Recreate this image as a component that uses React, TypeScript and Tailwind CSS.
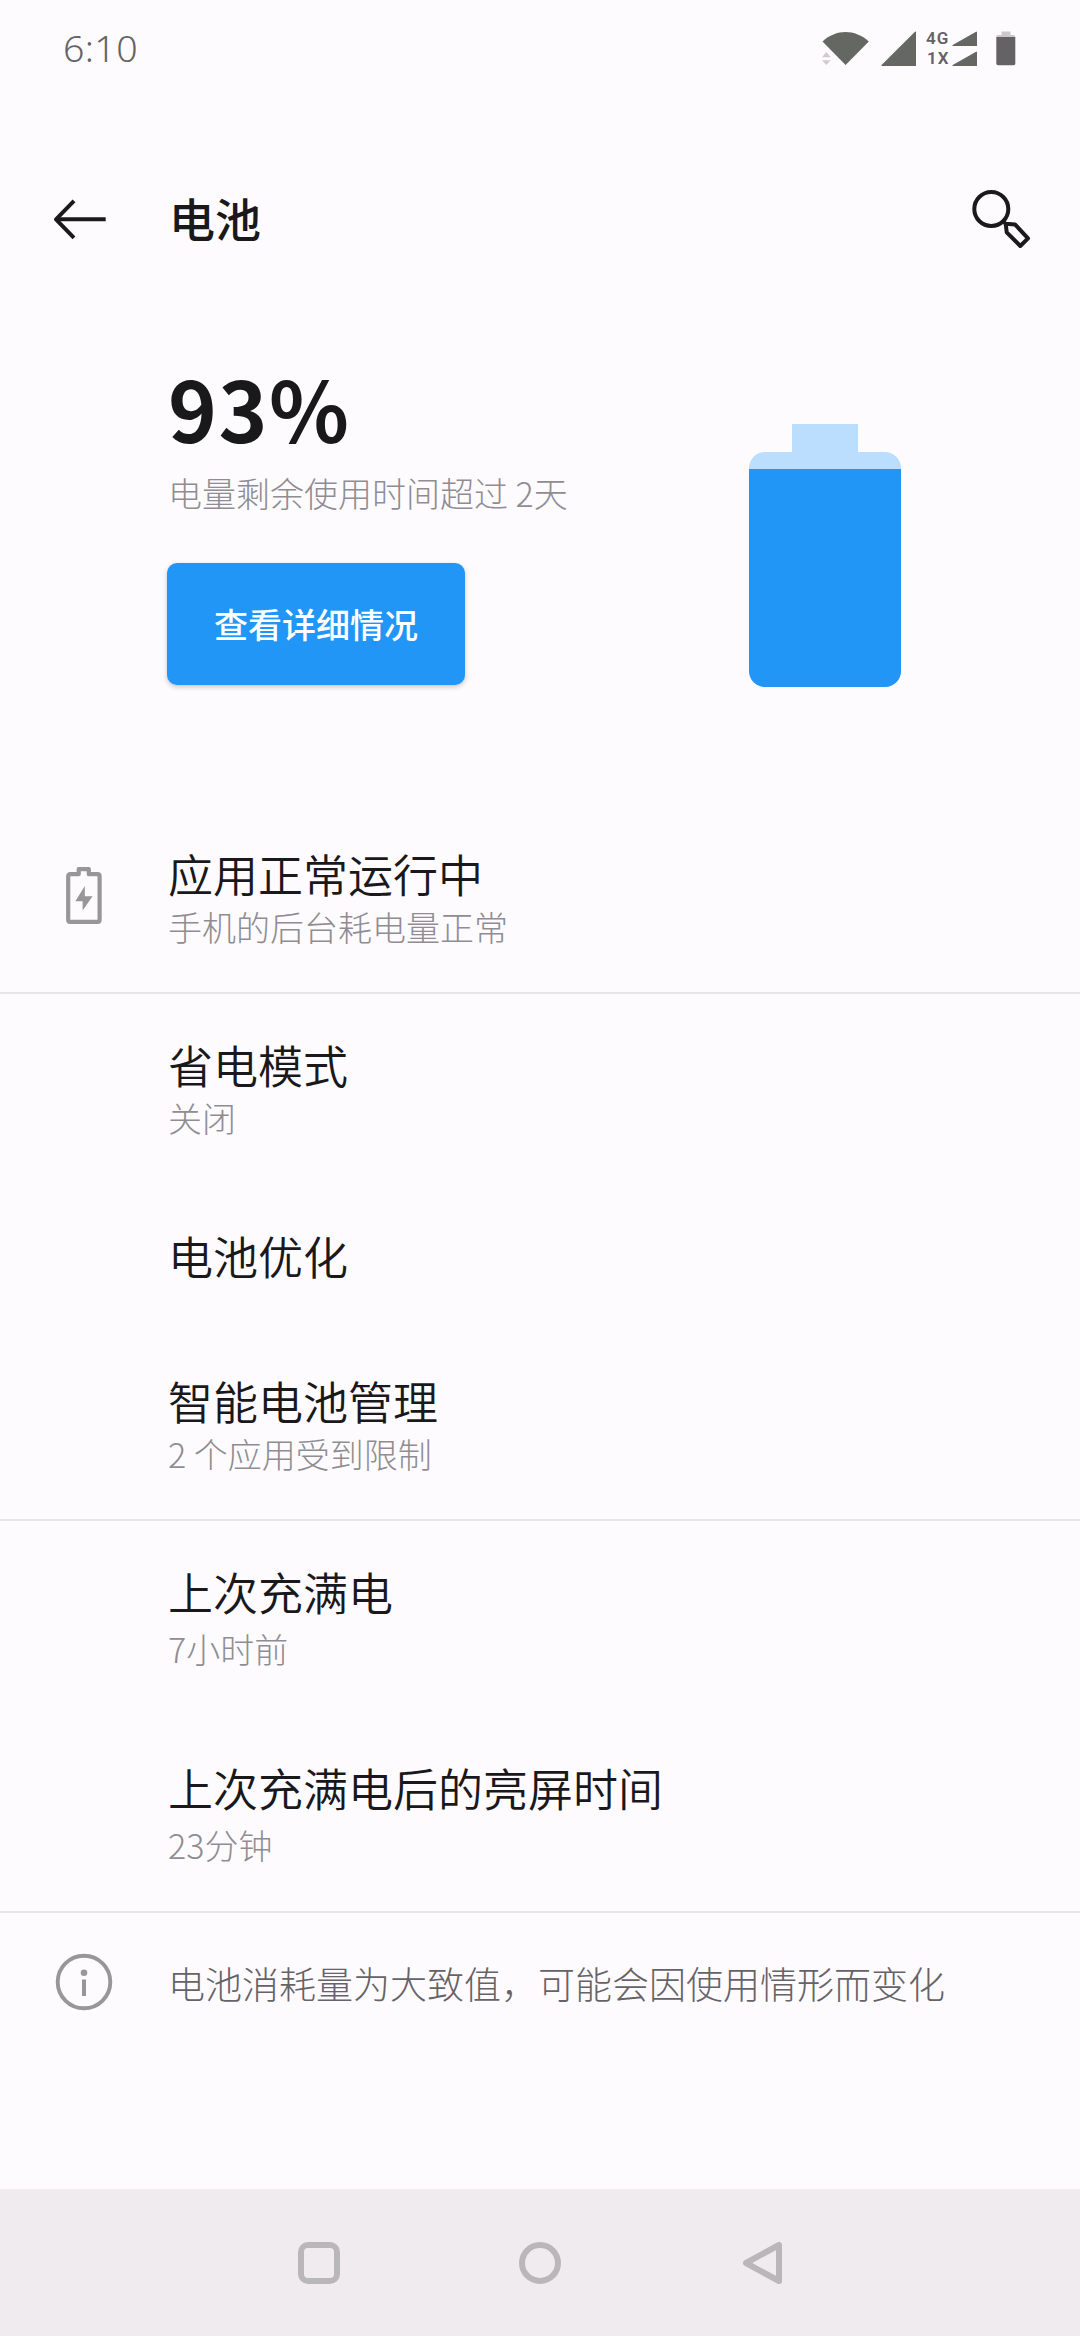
type RowProps = {
  title: string;
  subtitle?: string;
  className: string;
  gap?: string;
  icon?: React.ReactNode;
};

const WifiIcon = () => (
  <svg width="48" height="36" viewBox="0 0 48 36" fill="#646762">
    <path d="M0.5 11.5C14 -1.2 33 -1.2 46.8 11.5L23.6 35Z" />
    <path d="M0 27.2L4.3 22L8.8 27.2ZM0 30.2H8.8L4.3 35Z" fill="#cfcccf" />
  </svg>
);

const SignalIcon = ({ width, height }: { width: number; height: number }) => (
  <svg width={width} height={height} viewBox={`0 0 ${width} ${height}`} fill="#646762" stroke="#646762" strokeWidth="1.2" strokeLinejoin="round">
    <path d={`M${width - 0.6} 1.2V${height - 0.6}H1Z`} />
  </svg>
);

const BatteryStatusIcon = () => (
  <svg width="20" height="35" viewBox="0 0 20 35">
    <path d="M5.5 0.5H14.5V4H17.5Q19.3 4 19.3 6H0.3Q0.3 4 2 4H5.5Z" fill="#cbc8cb" />
    <path d="M0.3 6H19.3V32.5Q19.3 34.3 17.5 34.3H2Q0.3 34.3 0.3 32.5Z" fill="#656266" />
  </svg>
);

const BackIcon = () => (
  <svg width="54" height="42" viewBox="0 0 54 42" fill="none" stroke="#1a191b" strokeWidth="4">
    <path d="M52.7 21.3H3" />
    <path d="M21 2.8L3 21.3L21 39.8" strokeLinejoin="round" />
  </svg>
);

const SearchIcon = () => (
  <svg width="62" height="62" viewBox="0 0 62 62" fill="none" stroke="#1a191b" strokeWidth="4" strokeLinejoin="round">
    <circle cx="21.3" cy="21" r="17" />
    <path d="M32.8 32.8L35.7 35.8L45 36.4L58 50.3L50.3 58L36.7 44.3L35.7 35.8" />
  </svg>
);

const ChargeIcon = () => (
  <svg width="36" height="58" viewBox="0 0 36 58" fill="none">
    <path d="M12.7 2.2H22.8V7.2H31.5Q33.6 7.2 33.6 9.3V52.8Q33.6 54.9 31.5 54.9H4.3Q2.2 54.9 2.2 52.8V9.3Q2.2 7.2 4.3 7.2H12.7Z" stroke="#979797" strokeWidth="4.2" strokeLinejoin="round" />
    <path d="M18.8 19L9.3 34.3H16.6V43.6L26.6 29.2H18.8Z" fill="#979797" />
  </svg>
);

const InfoIcon = () => (
  <svg width="58" height="58" viewBox="0 0 58 58" fill="none">
    <circle cx="29" cy="29" r="26.3" stroke="#979797" strokeWidth="3.9" />
    <circle cx="29" cy="19.8" r="3.3" fill="#979797" />
    <path d="M29 26.5V43" stroke="#979797" strokeWidth="4" />
  </svg>
);

const Row = ({ title, subtitle, className, gap = "mt-[7px]", icon }: RowProps) => (
  <div className={`flex shrink-0 items-center ${className}`}>
    <div className="flex w-[168px] justify-center pr-px">{icon}</div>
    <div className="pt-[2px]">
      <h2 className="text-[45px] leading-[53px] font-[350] text-[#19181b]">{title}</h2>
      {subtitle && <p className={`text-[34px] leading-[40px] font-light text-[#8f8d91] ${gap}`}>{subtitle}</p>}
    </div>
  </div>
);

const Divider = () => <div className="h-[2px] shrink-0 bg-[#e8e5e9]" />;

const App = () => {
  return (
    <div lang="zh-CN" className="flex h-[2336px] w-[1080px] flex-col overflow-hidden bg-[#fefbff] font-['Noto_Sans_CJK_SC',sans-serif] whitespace-nowrap">
      {/* Status bar */}
      <div className="flex h-[98px] shrink-0 items-center justify-between pr-[64px] pl-[63px]">
        <span className="pb-[2px] font-['Noto_Sans',sans-serif] text-[37.5px] font-[350] tracking-[0.4px] text-[#656367]">6:10</span>
        <div className="flex items-center pb-[2px]">
          <WifiIcon />
          <div className="ml-[11px] flex">
            <SignalIcon width={35} height={35} />
          </div>
          <div className="ml-[10px] flex flex-col gap-[5px]">
            <div className="flex h-[15px] items-end">
              <span className="w-[26px] font-['Roboto',sans-serif] text-[17px] leading-[15px] font-semibold tracking-[1px] text-[#646265]">4G</span>
              <SignalIcon width={25} height={15} />
            </div>
            <div className="flex h-[15px] items-end">
              <span className="w-[26px] pl-[1px] font-['Roboto',sans-serif] text-[17px] leading-[15px] font-semibold tracking-[1px] text-[#646265]">1X</span>
              <SignalIcon width={25} height={15} />
            </div>
          </div>
          <div className="ml-[19px]">
            <BatteryStatusIcon />
          </div>
        </div>
      </div>

      {/* Header */}
      <header className="flex h-[242px] shrink-0 items-center pr-[48px] pl-[53px]">
        <BackIcon />
        <h1 className="ml-[62px] flex-1 pb-[4px] text-[46px] leading-[54px] font-medium text-[#19181b]">电池</h1>
        <SearchIcon />
      </header>

      {/* Summary */}
      <section className="flex h-[460px] shrink-0 justify-between pr-[179px] pl-[167px]">
        <div>
          <div className="mt-[17px] pl-px text-[83px] leading-[100px] font-[600] tracking-[1.5px] text-[#19181b]">93%</div>
          <p className="mt-[16px] pl-[1px] text-[34px] leading-[40px] font-light text-[#8f8d91]">电量剩余使用时间超过 2天</p>
          <button className="mt-[50px] flex h-[122px] w-[298px] items-center justify-center rounded-[10px] bg-[#2196f7] text-[34px] leading-[40px] font-medium text-white shadow-[0_2px_5px_rgba(0,0,0,0.22)]">
            查看详细情况
          </button>
        </div>
        <div className="mt-[84px] flex flex-col items-center">
          <div className="h-[28px] w-[66px] bg-[#bbdeff]" />
          <div className="h-[235px] w-[152px] overflow-hidden rounded-[16px] bg-[#bbdeff] pt-[17px]">
            <div className="h-full bg-[#2196f7]" />
          </div>
        </div>
      </section>

      {/* Settings */}
      <Row className="h-[192px]" icon={<ChargeIcon />} title="应用正常运行中" subtitle="手机的后台耗电量正常" />
      <Divider />
      <Row className="h-[186px]" title="省电模式" subtitle="关闭" />
      <Row className="h-[148px]" title="电池优化" />
      <Row className="h-[191px] pb-[2px]" title="智能电池管理" subtitle="2 个应用受到限制" />
      <Divider />
      <Row className="h-[191px] pb-[2px]" gap="mt-[11px]" title="上次充满电" subtitle="7小时前" />
      <Row className="h-[199px]" gap="mt-[11px]" title="上次充满电后的亮屏时间" subtitle="23分钟" />
      <Divider />

      {/* Footer note */}
      <div className="flex h-[138px] shrink-0 items-center">
        <div className="flex w-[168px] justify-center pr-[1px]">
          <InfoIcon />
        </div>
        <p className="pt-[2px] text-[37px] leading-[44px] font-light text-[#656367]">电池消耗量为大致值，可能会因使用情形而变化</p>
      </div>

      {/* Navigation bar */}
      <nav className="mt-auto flex h-[147px] shrink-0 items-center justify-between bg-[#efebef] pr-[298px] pl-[298px]">
        <div className="size-[42px] rounded-[10px] border-6 border-[#bab7bb]" />
        <div className="size-[42px] rounded-full border-6 border-[#bab7bb]" />
        <svg width="42" height="46" viewBox="0 0 42 46" fill="none" stroke="#bab7bb" strokeWidth="6" strokeLinejoin="round">
          <path d="M39 5V41L6 23Z" />
        </svg>
      </nav>
    </div>
  );
};

export default App;
